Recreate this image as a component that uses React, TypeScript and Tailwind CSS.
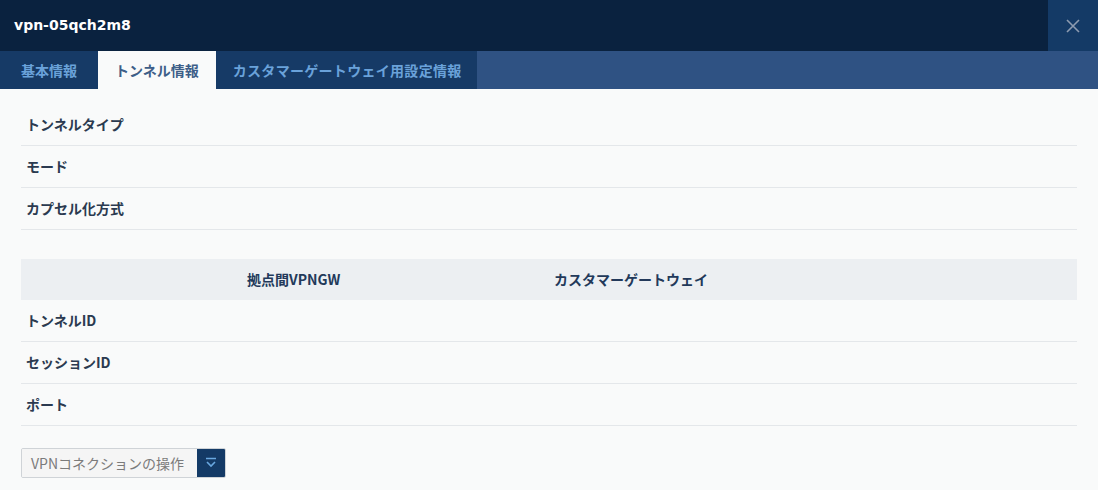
import React from "react";

const font = { fontFamily: '"Noto Sans CJK JP", "Noto Sans", sans-serif' };

function Row({ label }: { label: string }) {
  return (
    <div className="h-[42px] flex items-center px-[5px] border-b border-[#e4e7ea] text-[14px] font-bold text-[#2b3a50]">
      {label}
    </div>
  );
}

export default function App() {
  return (
    <div className="w-[1098px] h-[490px] bg-[#f9fafa] flex flex-col overflow-hidden" style={font}>
      <div className="h-[51px] bg-[#0a223f] flex items-stretch">
        <div className="flex-1 flex items-center pl-[14px] text-white font-bold text-[14px] font-['DejaVu_Sans',sans-serif]">vpn-05qch2m8</div>
        <div className="w-[50px] bg-[#143a66] flex items-center justify-center">
          <svg width="16" height="16" viewBox="0 0 16 16" fill="none" stroke="#8d9bb0" strokeWidth="1.6">
            <path d="M2 2 L14 14 M14 2 L2 14" />
          </svg>
        </div>
      </div>
      <div className="h-[38px] bg-[#2f5283] flex">
        <div className="flex bg-[#163a66]">
          <div className="px-[21px] flex items-center text-[14px] font-bold text-[#6aa2da]">基本情報</div>
          <div className="px-[17px] flex items-center text-[14px] font-bold text-[#3d5e88] bg-[#f9fafa]">トンネル情報</div>
          <div className="pl-[17px] pr-[15px] flex items-center text-[14px] font-bold text-[#6aa2da] tracking-[0.3px]">カスタマーゲートウェイ用設定情報</div>
        </div>
      </div>
      <div className="px-[21px] pt-[15px]">
        <Row label="トンネルタイプ" />
        <Row label="モード" />
        <Row label="カプセル化方式" />
        <div className="h-[29px]" />
        <div className="h-[41px] bg-[#eceff2] flex items-center text-[14px] font-bold text-[#22395a]">
          <div className="w-[533px] pl-[226px]">拠点間VPNGW</div>
          <div>カスタマーゲートウェイ</div>
        </div>
        <Row label="トンネルID" />
        <Row label="セッションID" />
        <Row label="ポート" />
        <div className="mt-[22px] flex">
          <div className="h-[30px] flex border border-[#cfd3d7] rounded-[2px] overflow-hidden">
            <div className="w-[175px] bg-[#f5f5f5] flex items-center pl-[9px] text-[14px] text-[#7b7b7b]">VPNコネクションの操作</div>
            <div className="w-[28px] bg-[#143a66] flex items-center justify-center">
              <svg width="12" height="12" viewBox="0 0 12 12" fill="none" stroke="#6aa8e0" strokeWidth="1.6">
                <path d="M1 1.5 H11" />
                <path d="M2 5 L6 9 L10 5" />
              </svg>
            </div>
          </div>
        </div>
      </div>
    </div>
  );
}
